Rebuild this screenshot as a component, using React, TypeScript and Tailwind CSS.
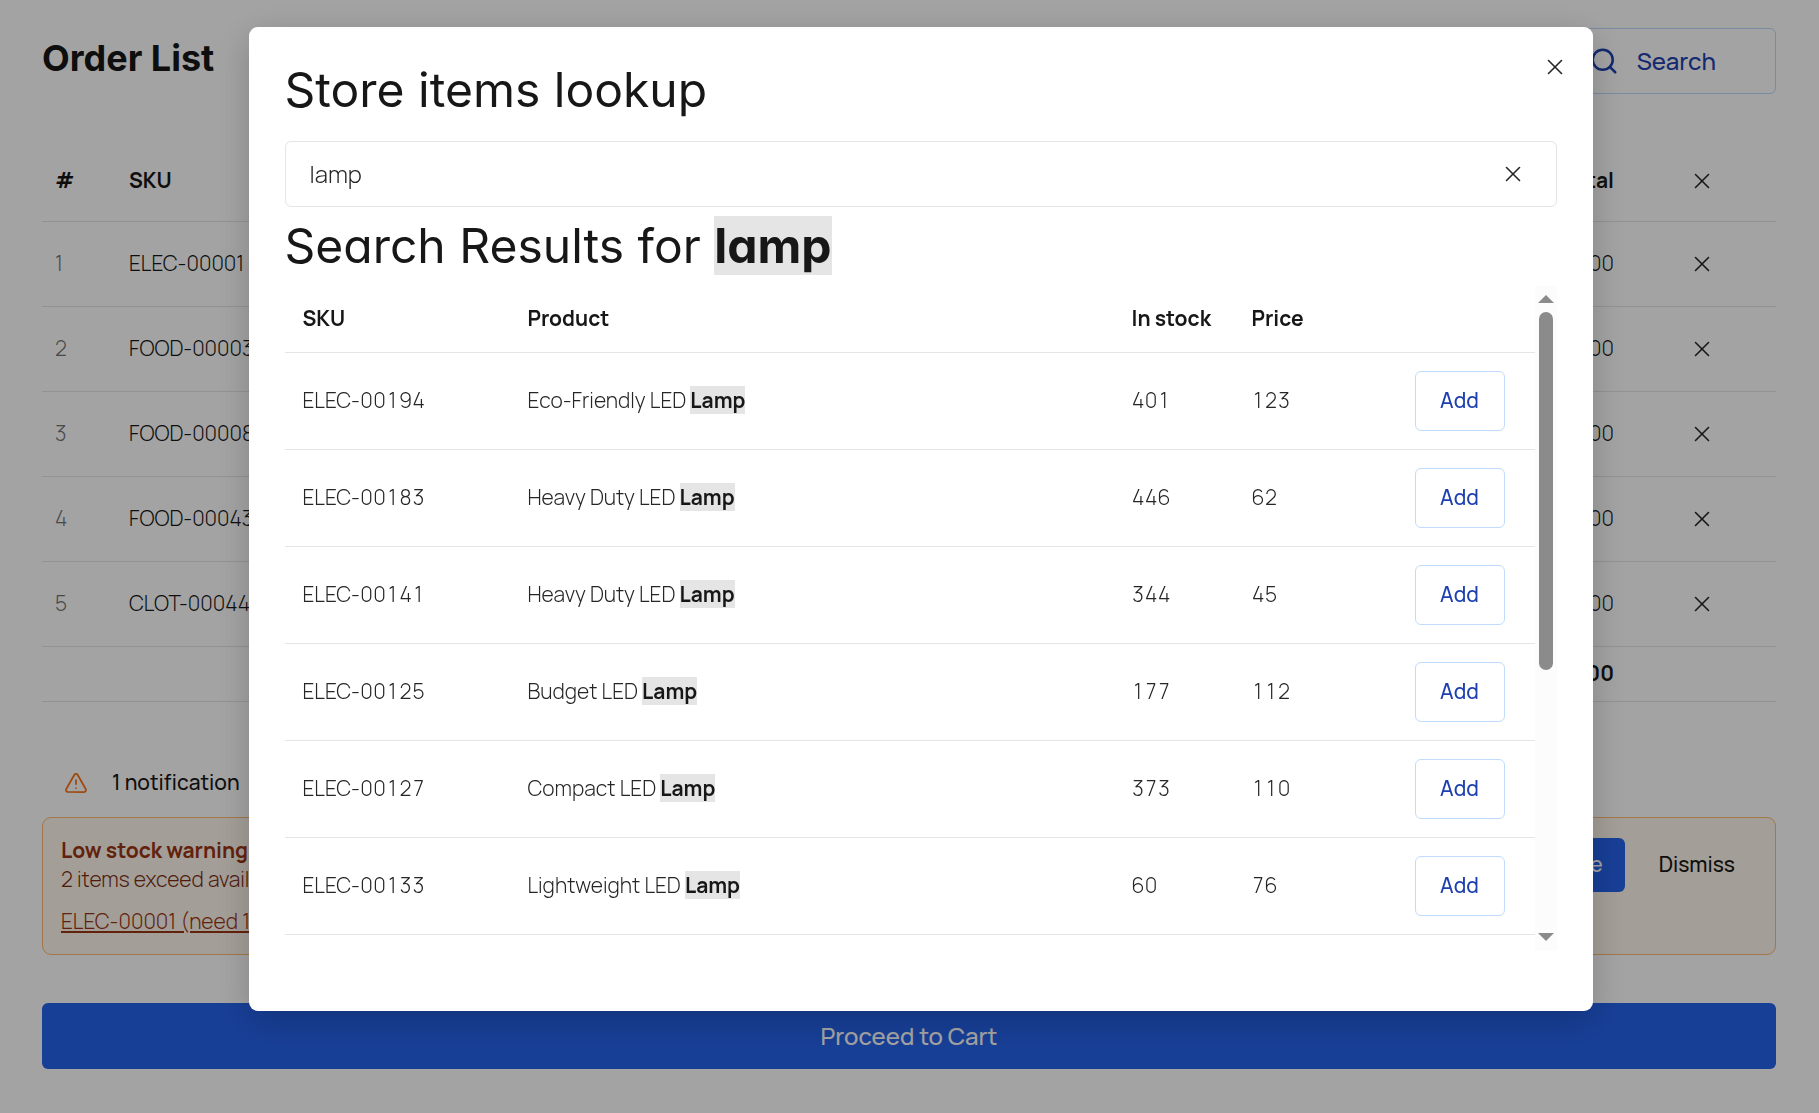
import { useState } from "react";
import { Search, TriangleAlert, X } from "lucide-react";

const orderRows = ["ELEC-00001", "FOOD-00003", "FOOD-00008", "FOOD-00043", "CLOT-00044"];

const results = [
  { sku: "ELEC-00194", product: "Eco-Friendly LED", stock: 401, price: 123 },
  { sku: "ELEC-00183", product: "Heavy Duty LED", stock: 446, price: 62 },
  { sku: "ELEC-00141", product: "Heavy Duty LED", stock: 344, price: 45 },
  { sku: "ELEC-00125", product: "Budget LED", stock: 177, price: 112 },
  { sku: "ELEC-00127", product: "Compact LED", stock: 373, price: 110 },
  { sku: "ELEC-00133", product: "Lightweight LED", stock: 60, price: 76 },
];

function CloseIcon() {
  return <X size={26} strokeWidth={1.5} className="text-neutral-800" aria-hidden="true" />;
}

function OrderPage() {
  return (
    <main className="pt-7 pr-[43px] pb-11 pl-[42px]">
      <header className="flex h-[66px] items-start justify-between">
        <h1 className="font-['Inter',sans-serif] text-[36px] leading-[60px] font-bold text-neutral-900">Order List</h1>
        <button className="flex h-[66px] items-center gap-[18px] rounded-md border border-[#bfdbfe] px-[59px] text-2xl font-medium text-[#1e40af]">
          <Search size={30} strokeWidth={2} aria-hidden="true" />
          Search
        </button>
      </header>

      <table className="mt-[47px] w-full table-fixed">
        <colgroup>
          <col className="w-[74px]" />
          <col />
          <col className="w-[200px]" />
          <col className="w-[149px]" />
        </colgroup>
        <thead>
          <tr className="h-20 border-b border-neutral-200 font-bold">
            <th className="px-[13px] text-left">#</th>
            <th className="px-[13px] text-left">SKU</th>
            <th className="px-[13px] text-right">Total</th>
            <th>
              <button aria-label="Remove all items" className="mx-auto block">
                <CloseIcon />
              </button>
            </th>
          </tr>
        </thead>
        <tbody>
          {orderRows.map((sku, i) => (
            <tr key={sku} className="h-[85px] border-b border-neutral-200">
              <td className="px-[13px] text-neutral-500">{i + 1}</td>
              <td className="px-[13px]">{sku}</td>
              <td className="px-[13px] text-right">.00</td>
              <td>
                <button aria-label={`Remove ${sku}`} className="mx-auto block">
                  <CloseIcon />
                </button>
              </td>
            </tr>
          ))}
        </tbody>
        <tfoot>
          <tr className="h-[55px] border-b border-neutral-200 font-bold">
            <td />
            <td />
            <td className="px-[13px] text-right">.00</td>
            <td />
          </tr>
        </tfoot>
      </table>

      <button className="mt-[54px] flex h-[54px] items-center gap-6 px-[22px] font-medium">
        <TriangleAlert size={24} strokeWidth={1.75} className="text-[#f97316]" aria-hidden="true" />
        1 notification
      </button>

      <section className="mt-[7px] flex items-start justify-between rounded-[9px] border border-[#fdba74] bg-[#fff7ed] px-[18px] py-[18px]">
        <div className="leading-[29px]">
          <h2 className="font-bold text-[#9a3412]">Low stock warning</h2>
          <p className="text-[#7c2d12]">2 items exceed available</p>
          <a href="#ELEC-00001" className="mt-[13px] block text-[#9a3412] underline">
            ELEC-00001 (need 1
          </a>
        </div>
        <div className="mt-0.5 flex">
          <button className="h-[54px] rounded-md bg-[#2563eb] px-[22px] font-medium text-white">Update</button>
          <button className="ml-3 h-[54px] px-[22px] font-medium">Dismiss</button>
        </div>
      </section>

      <button className="mt-12 h-[66px] w-full rounded-md bg-[#2563eb] text-2xl font-medium text-white">Proceed to Cart</button>
    </main>
  );
}

function ScrollBar() {
  return (
    <div className="flex w-[22px] shrink-0 flex-col items-center bg-[#fcfcfc] pt-[9px] pb-[10px]" aria-hidden="true">
      <svg width="16" height="8" viewBox="0 0 16 8" fill="#8b8b8b">
        <path d="M8 0 16 8H0Z" />
      </svg>
      <div className="mt-[9px] h-[358px] w-3.5 rounded-full bg-[#8b8b8b]" />
      <svg className="mt-auto" width="16" height="8" viewBox="0 0 16 8" fill="#8b8b8b">
        <path d="M0 0H16L8 8Z" />
      </svg>
    </div>
  );
}

function LookupDialog() {
  const [query, setQuery] = useState("lamp");
  return (
    <div className="fixed inset-0 flex items-start justify-center bg-black/36 pt-[27px] pl-[22px]">
      <div
        role="dialog"
        aria-modal="true"
        aria-labelledby="lookup-title"
        className="relative w-full max-w-[1344px] rounded-[9px] bg-white px-9 pt-[34px] pb-[60px] shadow-[0_9px_36px_rgba(0,0,0,0.2)]"
      >
        <button aria-label="Close" className="absolute top-[27px] right-[25px]">
          <CloseIcon />
        </button>
        <h2 id="lookup-title" className="font-['Inter',sans-serif] text-5xl leading-[58px] font-normal text-neutral-900 [font-feature-settings:'cv11']">
          Store items lookup
        </h2>
        <div className="mt-[22px] flex h-[66px] items-center rounded-md border border-neutral-200 pr-[30px] pl-6">
          <input
            aria-label="Search store items"
            value={query}
            onChange={(e) => setQuery(e.target.value)}
            className="min-w-0 flex-1 text-2xl text-neutral-800 outline-none"
          />
          <button aria-label="Clear search" onClick={() => setQuery("")}>
            <CloseIcon />
          </button>
        </div>
        <h2 className="mt-2.5 font-['Inter',sans-serif] text-5xl leading-[58px] font-normal text-neutral-900 [font-feature-settings:'cv11']">
          Search Results for <mark className="bg-neutral-200 font-bold text-neutral-900">lamp</mark>
        </h2>

        <div className="mt-[11px] flex h-[665px]">
          <div className="min-w-0 flex-1">
            <table className="w-full table-fixed tabular-nums">
              <colgroup>
                <col className="w-[225px]" />
                <col />
                <col className="w-[120px]" />
                <col className="w-[120px]" />
                <col className="w-[181px]" />
              </colgroup>
              <thead>
                <tr className="h-[66px] border-b border-neutral-200 text-left font-bold">
                  <th className="px-[18px]">SKU</th>
                  <th className="px-[18px]">Product</th>
                  <th className="px-[18px]">In stock</th>
                  <th className="px-[18px]">Price</th>
                  <td />
                </tr>
              </thead>
              <tbody className="text-neutral-800">
                {results.map((r) => (
                  <tr key={r.sku} className="h-[97px] border-b border-neutral-200">
                    <td className="px-[18px]">{r.sku}</td>
                    <td className="px-[18px]">
                      {r.product} <mark className="bg-neutral-200 font-bold text-neutral-900">Lamp</mark>
                    </td>
                    <td className="px-[18px]">{r.stock}</td>
                    <td className="px-[18px]">{r.price}</td>
                    <td className="pr-[30px] text-right">
                      <button className="h-[60px] w-[90px] rounded-md border border-[#bfdbfe] font-medium text-[#1e40af]">Add</button>
                    </td>
                  </tr>
                ))}
              </tbody>
            </table>
          </div>
          <ScrollBar />
        </div>
      </div>
    </div>
  );
}

export default function App() {
  return (
    <div className="min-h-screen bg-white font-['Manrope','Inter',sans-serif] text-[21px] leading-[29px] font-light text-neutral-900">
      <OrderPage />
      <LookupDialog />
    </div>
  );
}
